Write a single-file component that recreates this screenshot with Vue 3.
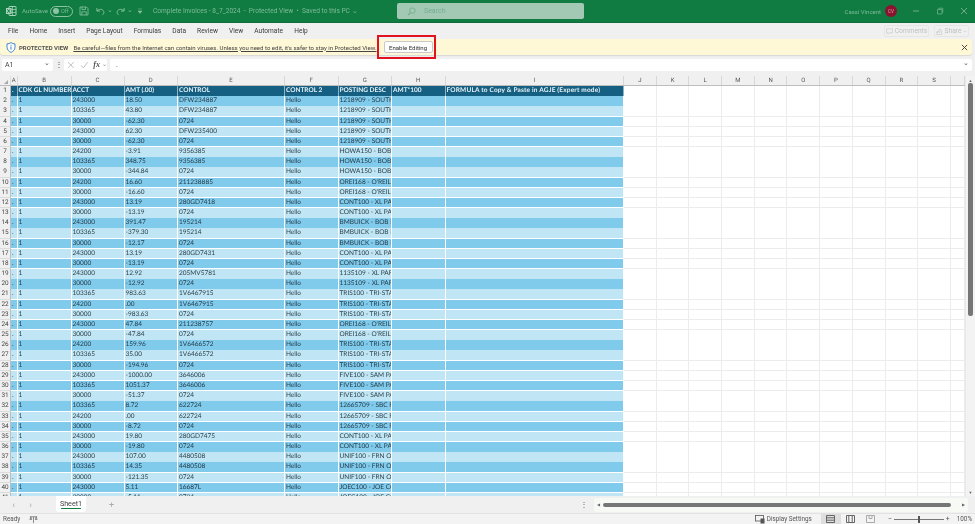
<template>
  <div class="app">
    <header class="titlebar">
      <svg class="logo" width="12" height="12" viewBox="0 0 12 12">
        <rect x="4" y="1.5" width="7" height="9" rx=".6" fill="none" stroke="#a9d3bc" />
        <path d="M4 4.5h7M4 7.5h7M7.5 1.5v9" stroke="#a9d3bc" stroke-width=".7" />
        <rect x="1" y="3" width="5.5" height="6" fill="#a9d3bc" />
        <path d="M2.4 4.3l2.6 3.4M5 4.3L2.4 7.700" stroke="#107c41" />
      </svg>
      <span class="autosave">AutoSave</span>
      <span class="toggle"><i></i>Off</span>
      <svg class="qa save" width="10" height="10" viewBox="0 0 10 10">
        <path d="M1 1h6.500L9 2.500V9H1zM3 1v2.500h3.500V1M2.800 9V5.800h4.400V9" fill="none" stroke="#8cc3a4" stroke-width=".8" />
      </svg>
      <svg class="qa undo" width="9" height="9" viewBox="0 0 10 10">
        <path d="M1 1v3.500h3.500M1.200 4.400C3 2 7.500 1.800 8.600 5c.5 1.600-.4 3-1.600 4" fill="none" stroke="#8cc3a4" />
      </svg>
      <span class="caret">⌄</span>
      <svg class="qa redo" width="9" height="9" viewBox="0 0 10 10">
        <path d="M9 1v3.500H5.500M8.800 4.400C7 2 2.500 1.800 1.400 5c-.5 1.600.4 3 1.600 4" fill="none" stroke="#8cc3a4" />
      </svg>
      <span class="caret">⌄</span>
      <svg class="qa more" width="6" height="6" viewBox="0 0 6 6">
        <path d="M1 1h4M1 3h4L3 5.400z" fill="#8cc3a4" stroke="#8cc3a4" stroke-width=".5" />
      </svg>
      <span class="doc">Complete Invoices - 8_7_2024 &nbsp;-&nbsp; Protected View &nbsp;•&nbsp; Saved to this PC ⌄</span>
      <div class="search">
        <svg width="9" height="9" viewBox="0 0 10 10">
          <circle cx="6" cy="4" r="3" fill="none" stroke="#6fae8a" />
          <path d="M3.800 6.200L1 9" stroke="#6fae8a" stroke-width="1.200" />
        </svg>
        <span>Search</span>
      </div>
      <span class="user">Cassi Vincent</span>
      <span class="avatar">CV</span>
      <div class="winbtns">
        <svg width="8" height="8" viewBox="0 0 8 8"><path d="M1 4h6" stroke="#6fae8a" /></svg>
        <svg width="8" height="8" viewBox="0 0 8 8"><path d="M1.500 2.500h4.500v4.500H1.500zM2.800 2.500V1.200h4v4H6" fill="none" stroke="#6fae8a" stroke-width=".8" /></svg>
        <svg width="8" height="8" viewBox="0 0 8 8"><path d="M1 1l6 6M7 1L1 7" stroke="#6fae8a" /></svg>
      </div>
    </header>

    <nav class="ribbon">
      <span v-for="t in tabs" :key="t">{{ t }}</span>
      <div class="ribbon-right">
        <button class="ghost comments">
          <svg width="7" height="7" viewBox="0 0 8 8"><path d="M.5 1h7v4.500H3.500L2 7V5.500H.5z" fill="none" stroke="#c4c4c4" stroke-width=".7" /></svg>
          Comments
        </button>
        <button class="ghost share">
          <svg width="7" height="7" viewBox="0 0 8 8"><path d="M1 4v3.500h5.500V5M4 1l3 2.200L4 5.200V4C2.500 4 1.800 4.600 1.400 5.500 1.500 3.500 2.500 2.400 4 2.300z" fill="none" stroke="#c4c4c4" stroke-width=".7" /></svg>
          Share <span class="share-caret">⌄</span>
        </button>
      </div>
    </nav>

    <div class="msgbar">
      <svg class="shield" width="10" height="11" viewBox="0 0 10 11">
        <path d="M5 .6c1 .9 2.600 1.300 4 1.300v3.300C9 7.800 7 9.500 5 10.400 3 9.500 1 7.800 1 5.200V1.900C2.400 1.900 4 1.500 5 .6z" fill="#fff" stroke="#2b7cd3" stroke-width=".9" />
        <path d="M5 4.500v3M5 2.800v.9" stroke="#2b7cd3" />
      </svg>
      <b>PROTECTED VIEW</b>
      <a>Be careful—files from the Internet can contain viruses. Unless you need to edit, it's safer to stay in Protected View.</a>
      <div class="callout"><button>Enable Editing</button></div>
      <svg class="msgclose" width="7" height="7" viewBox="0 0 8 8"><path d="M1 1l6 6M7 1L1 7" stroke="#444" stroke-width="1.100" /></svg>
    </div>

    <div class="formulabar">
      <div class="namebox">A1<span>⌄</span></div>
      <span class="dots">⋮</span>
      <div class="fxbox">
        <svg width="8" height="8" viewBox="0 0 8 8"><path d="M1 1l6 6M7 1L1 7" stroke="#bdbdbd" /></svg>
        <svg width="9" height="8" viewBox="0 0 9 8"><path d="M1 4.500l2.500 2.500L8 1" fill="none" stroke="#bdbdbd" /></svg>
        <i>fx</i><span class="fxcaret">⌄</span>
      </div>
      <div class="formula">.<span>⌄</span></div>
    </div>

    <div class="sheetarea">
      <div class="grid">
        <div class="row head">
          <div class="corner"><i></i></div>
          <div v-for="c in columns" :key="c" class="colhead">{{ c }}</div>
        </div>
        <div class="row hdr">
          <div class="rownum">1</div>
          <div v-for="(h, i) in headers" :key="i" class="cell" :class="{ wide: i === 8 }">{{ h }}</div>
          <div v-for="n in 11" :key="n" class="cell blank"></div>
        </div>
        <div v-for="(r, idx) in rows" :key="idx" class="row" :class="idx % 2 ? 'light' : 'dark'">
          <div class="rownum">{{ idx + 2 }}</div>
          <div class="cell">.</div>
          <div class="cell">1</div>
          <div class="cell">{{ r[0] }}</div>
          <div class="cell">{{ r[1] }}</div>
          <div class="cell">{{ r[2] }}</div>
          <div class="cell">Hello</div>
          <div class="cell">{{ r[3] }}</div>
          <div class="cell"></div>
          <div class="cell"></div>
          <div v-for="n in 11" :key="n" class="cell blank"></div>
        </div>
      </div>
      <div class="vscroll">
        <span class="arrow">▲</span>
        <div class="vthumb"></div>
        <span class="arrow bottom">▼</span>
      </div>
    </div>

    <div class="tabbar">
      <span class="nav">‹</span>
      <span class="nav">›</span>
      <div class="sheettab">Sheet1</div>
      <span class="plus">+</span>
      <span class="kebab">⋮</span>
      <div class="hscroll">
        <span class="arrow">◀</span>
        <div class="hthumb"></div>
        <span class="arrow">▶</span>
      </div>
    </div>

    <footer class="status">
      <span class="ready">Ready</span>
      <svg width="9" height="9" viewBox="0 0 10 10">
        <path d="M1 2h8M5 2v7M2 2l-1 3h2zM8 2L7 5h2z" fill="none" stroke="#666" stroke-width=".8" />
      </svg>
      <div class="status-right">
        <svg width="10" height="9" viewBox="0 0 10 9"><rect x=".5" y=".5" width="8" height="5.500" fill="none" stroke="#555" stroke-width=".8" /><rect x="5.500" y="3.500" width="4" height="5" fill="#555" /></svg>
        <span class="display">Display Settings</span>
        <div class="view active">
          <svg width="9" height="8" viewBox="0 0 9 8"><path d="M.5.500h8v7h-8zM.5 2.800h8M.5 5.200h8" fill="none" stroke="#666" /></svg>
        </div>
        <div class="view">
          <svg width="9" height="8" viewBox="0 0 9 8"><path d="M.5.500h8v7h-8zM2.800.5v7M6.200.5v7" fill="none" stroke="#666" /></svg>
        </div>
        <div class="view">
          <svg width="9" height="8" viewBox="0 0 9 8"><path d="M.5.500h8v7h-8zM3 .5v3h3v-3" fill="none" stroke="#aaa" /></svg>
        </div>
        <div class="zoom">
          <span>−</span>
          <div class="slider"><i></i></div>
          <span>+</span>
        </div>
        <span class="pct">100%</span>
      </div>
    </footer>
  </div>
</template>

<script setup>
const tabs = ['File', 'Home', 'Insert', 'Page Layout', 'Formulas', 'Data', 'Review', 'View', 'Automate', 'Help']
const columns = ['A', 'B', 'C', 'D', 'E', 'F', 'G', 'H', 'I', 'J', 'K', 'L', 'M', 'N', 'O', 'P', 'Q', 'R', 'S', '']
const headers = ['.', 'CDK GL NUMBER', 'ACCT', 'AMT (.00)', 'CONTROL', 'CONTROL 2', 'POSTING DESC', 'AMT*100', 'FORMULA to Copy & Paste in AGJE (Expert mode)']

const south = '1218909 - SOUTH'
const howa = 'HOWA150 - BOB'
const orei = "OREI168 - O'REILL"
const cont = 'CONT100 - XL PA'
const bmb = 'BMBUICK - BOB N'
const xlp = '1135109 - XL PAR'
const tris = 'TRIS100 - TRI-STA'
const five = 'FIVE100 - SAM PA'
const sbc = '12665709 - SBC R'
const unif = 'UNIF100 - FRN OI'
const joec = 'JOEC100 - JOE CO'

const rows = [
  ['243000', '18.50', 'DFW234887', south],
  ['103365', '43.80', 'DFW234887', south],
  ['30000', '-62.30', '0724', south],
  ['243000', '62.30', 'DFW235400', south],
  ['30000', '-62.30', '0724', south],
  ['24200', '-3.91', '9356385', howa],
  ['103365', '348.75', '9356385', howa],
  ['30000', '-344.84', '0724', howa],
  ['24200', '16.60', '211238885', orei],
  ['30000', '-16.60', '0724', orei],
  ['243000', '13.19', '280GD7418', cont],
  ['30000', '-13.19', '0724', cont],
  ['243000', '391.47', '195214', bmb],
  ['103365', '-379.30', '195214', bmb],
  ['30000', '-12.17', '0724', bmb],
  ['243000', '13.19', '280GD7431', cont],
  ['30000', '-13.19', '0724', cont],
  ['243000', '12.92', '205MV5781', xlp],
  ['30000', '-12.92', '0724', xlp],
  ['103365', '983.63', '1V6467915', tris],
  ['24200', '.00', '1V6467915', tris],
  ['30000', '-983.63', '0724', tris],
  ['243000', '47.84', '211238757', orei],
  ['30000', '-47.84', '0724', orei],
  ['24200', '159.96', '1V6466572', tris],
  ['103365', '35.00', '1V6466572', tris],
  ['30000', '-194.96', '0724', tris],
  ['243000', '-1000.00', '3646006', five],
  ['103365', '1051.37', '3646006', five],
  ['30000', '-51.37', '0724', five],
  ['103365', '8.72', '622724', sbc],
  ['24200', '.00', '622724', sbc],
  ['30000', '-8.72', '0724', sbc],
  ['243000', '19.80', '280GD7475', cont],
  ['30000', '-19.80', '0724', cont],
  ['243000', '107.00', '4480508', unif],
  ['103365', '14.35', '4480508', unif],
  ['30000', '-121.35', '0724', unif],
  ['243000', '5.11', '16687L', joec],
  ['30000', '-5.11', '0724', joec],
]
</script>

<style>
html, body {
  margin: 0;
  overflow: hidden;
}
</style>

<style scoped>
.app {
  display: flex;
  flex-direction: column;
  width: 975px;
  height: 524px;
  overflow: hidden;
  background: #f0f0f0;
  font-family: Roboto, "Liberation Sans", sans-serif;
  color: #333;
  filter: blur(.3px);
}

/* title bar */
.titlebar {
  display: flex;
  align-items: center;
  flex: 0 0 23px;
  padding-left: 5px;
  background: #107c41;
  border-bottom: 1px solid #0d6e39;
  box-sizing: border-box;
  font-size: 6.6px;
  color: #7dbb98;
}
.autosave { width: 23px; margin-left: 5px; font-size: 6.200px; }
.toggle {
  display: flex;
  align-items: center;
  gap: 2px;
  box-sizing: border-box;
  width: 23px;
  height: 11px;
  margin-left: 5px;
  padding-left: 2px;
  border: 1px solid #8cc3a4;
  border-radius: 6px;
  font-size: 5.5px;
}
.toggle i {
  width: 6px;
  height: 6px;
  border-radius: 50%;
  background: #8cc3a4;
}
.save { margin-left: 6px; }
.undo { margin-left: 7px; }
.caret { margin: -3px 0 0 2px; font-size: 7px; }
.redo { margin-left: 3px; }
.more { margin-left: 4px; }
.doc {
  flex: none;
  width: 244px;
  margin-left: 10px;
  white-space: nowrap;
}
.search {
  display: flex;
  align-items: center;
  gap: 8px;
  box-sizing: border-box;
  width: 187px;
  height: 16px;
  padding-left: 10px;
  background: #a3c9b4;
  border-radius: 2px;
  color: #74ad8d;
  font-size: 7px;
}
.user { margin-left: auto; font-size: 6px; }
.avatar {
  display: flex;
  align-items: center;
  justify-content: center;
  width: 12px;
  height: 12px;
  margin-left: 4px;
  border-radius: 50%;
  background: #8a1430;
  color: #d8a7b2;
  font-size: 4.5px;
}
.winbtns {
  display: flex;
  gap: 16px;
  margin-left: 15px;
  margin-right: 7px;
}

/* ribbon tabs */
.ribbon {
  display: flex;
  align-items: center;
  flex: 0 0 16px;
  gap: 11.100px;
  padding-left: 8px;
  font-size: 6.600px;
  color: #3c3c3c;
}
.ribbon-right {
  display: flex;
  gap: 5px;
  margin-left: auto;
  margin-right: 6px;
}
.ghost {
  display: flex;
  align-items: center;
  justify-content: center;
  gap: 2px;
  box-sizing: border-box;
  height: 12px;
  padding: 0;
  border: 1px solid #e6e6e6;
  border-radius: 2px;
  background: #f0f0f0;
  font: inherit;
  color: #c0c0c0;
}
.comments { width: 45px; }
.share { width: 35px; }
.share-caret { margin-top: -3px; font-size: 5px; }

/* protected view bar */
.msgbar {
  display: flex;
  align-items: center;
  flex: 0 0 16px;
  margin-right: 3px;
  padding-left: 6px;
  background: #fff8d6;
  border-radius: 3px;
  box-shadow: 0 1px 1px #d8d8d8;
  font-size: 6.050px;
  color: #444;
  white-space: nowrap;
}
.msgbar b { margin-left: 3px; font-size: 6px; font-weight: 700; color: #555; }
.msgbar a { margin-left: 5px; text-decoration: underline; color: #444; }
.callout {
  display: flex;
  align-items: center;
  justify-content: flex-end;
  box-sizing: border-box;
  width: 59px;
  height: 24px;
  margin: -4px 0 -4px 0;
  padding-right: 1px;
  border: 2px solid #e0131f;
}
.callout button {
  box-sizing: border-box;
  width: 49px;
  height: 12px;
  padding: 0;
  border: 1px solid #c9c9c9;
  border-radius: 2px;
  background: #fdfdfd;
  font: inherit;
  color: #333;
}
.msgclose { margin-left: auto; margin-right: 4px; }

/* formula bar */
.formulabar {
  display: flex;
  align-items: center;
  flex: 0 0 21px;
  padding: 0 3px 2px 2px;
  box-sizing: border-box;
  font-size: 7px;
  color: #444;
}
.namebox, .fxbox, .formula {
  display: flex;
  align-items: center;
  box-sizing: border-box;
  height: 12px;
  background: #fff;
  border-radius: 2px;
}
.namebox {
  justify-content: space-between;
  width: 51px;
  padding: 0 3px;
}
.namebox span, .formula span { margin-top: -3px; color: #555; }
.dots { width: 11px; text-align: center; font-size: 8px; color: #555; }
.fxbox {
  gap: 5px;
  width: 43px;
  padding-left: 3px;
}
.fxbox i {
  font-family: "Liberation Serif", serif;
  font-size: 8px;
  font-weight: bold;
  color: #555;
}
.fxcaret { margin: -3px 0 0 -3px; font-size: 6px; color: #888; }
.formula {
  flex: 1;
  justify-content: space-between;
  margin-left: 3px;
  padding: 0 3px 0 6px;
}

/* sheet */
.sheetarea {
  display: flex;
  flex: 1;
  min-height: 0;
  background: #fff;
}
.grid {
  flex: 1;
  min-width: 0;
  overflow: hidden;
}
.row {
  display: grid;
  grid-template-columns: 11px 6.5px 54px 53px 53.500px 107px 53.500px 53.500px 53.500px 178.500px repeat(10, 32.700px) 14px;
  height: 10.18px;
  font-family: Lato, "Liberation Sans", sans-serif;
  font-size: 6.500px;
  line-height: 9.500px;
  color: #333;
  text-rendering: geometricPrecision;
}
.row.head {
  height: 9px;
  background: #f0f0f0;
  border-bottom: 1px solid #bdbdbd;
}
.corner {
  position: relative;
  border-right: 1px solid #dcdcdc;
}
.corner i {
  position: absolute;
  right: 2px;
  bottom: 1px;
  border: 2px solid transparent;
  border-right-color: #a8a8a8;
  border-bottom-color: #a8a8a8;
}
.colhead {
  border-right: 1px solid #d8d8d8;
  text-align: center;
  font-family: Roboto, sans-serif;
  font-size: 6px;
  line-height: 9px;
  color: #555;
}
.rownum {
  background: #f0f0f0;
  border-right: 1px solid #bdbdbd;
  border-bottom: 1px solid #dcdcdc;
  text-align: center;
  font-family: Roboto, sans-serif;
  font-size: 6.400px;
  color: #444;
}
.cell {
  overflow: hidden;
  box-sizing: border-box;
  padding-left: 1px;
  border-right: 1px solid #fff;
  border-bottom: 1px solid #fff;
  white-space: nowrap;
}
.cell.blank {
  background: #fff;
  border-color: #ececec;
}
.cell.wide { letter-spacing: .18px; }
.hdr .cell:not(.blank) {
  background: #156082;
  border-right-color: #8fb2c4;
  font-weight: 700;
  color: #e8f1f5;
}
.dark .cell:not(.blank) { background: #80caec; color: #1f3744; }
.light .cell:not(.blank) { background: #c0e6f5; color: #2c3f47; }

.vscroll {
  position: relative;
  flex: 0 0 10px;
  box-sizing: border-box;
  background: #f3f3f3;
  border-left: 1px solid #e8ece4;
}
.arrow {
  font-size: 4px;
  color: #666;
}
.vscroll .arrow {
  display: block;
  margin-top: 2px;
  text-align: center;
  line-height: 5px;
}
.vscroll .arrow.bottom {
  position: absolute;
  left: 0;
  right: 0;
  bottom: 1px;
}
.vthumb {
  width: 5px;
  height: 233px;
  margin: 0 auto;
  border-radius: 2px;
  background: #767676;
}

/* sheet tabs */
.tabbar {
  display: flex;
  align-items: center;
  flex: 0 0 17px;
  background: #f0f0f0;
  color: #aaa;
  font-size: 9px;
}
.nav { width: 17px; text-align: center; }
.nav:first-child { margin-left: 5px; }
.sheettab {
  box-sizing: border-box;
  width: 30px;
  height: 16px;
  margin: -1px 0 0 17px;
  padding-top: 3px;
  background: #fff linear-gradient(#107c41, #107c41) no-repeat center 12px / 20px 1px;
  border-radius: 0 0 3px 3px;
  text-align: center;
  font-size: 7.200px;
  color: #444;
}
.plus { margin-left: 23px; }
.kebab { margin-left: auto; margin-right: 6px; color: #666; font-size: 8px; }
.hscroll {
  display: flex;
  align-items: center;
  gap: 3px;
  box-sizing: border-box;
  width: 374px;
  height: 14px;
  margin-right: 7px;
  padding: 0 3px;
  background: #f7f9f5;
  border-radius: 2px;
}
.hthumb {
  flex: 1;
  height: 4px;
  margin-right: 8px;
  border-radius: 2px;
  background: #767676;
}

/* status bar */
.status {
  display: flex;
  align-items: center;
  flex: 0 0 11px;
  padding-left: 3px;
  background: #f3f3f3;
  border-top: 1px solid #e2e2e2;
  box-sizing: border-box;
  font-size: 6.300px;
  color: #555;
}
.ready { margin-right: 9px; }
.status-right {
  display: flex;
  align-items: center;
  margin-left: auto;
}
.display { margin: 0 9px 0 2px; }
.view {
  display: flex;
  align-items: center;
  justify-content: center;
  width: 20px;
  height: 10px;
}
.view.active { background: #dedede; }
.zoom {
  display: flex;
  align-items: center;
  gap: 2px;
  margin-left: 7px;
  font-size: 7px;
}
.slider {
  position: relative;
  width: 50px;
  height: 1px;
  background: #777;
}
.slider i {
  position: absolute;
  left: 24px;
  top: -3px;
  width: 2px;
  height: 7px;
  background: #555;
}
.pct { margin: 0 3px 0 7px; }
</style>
